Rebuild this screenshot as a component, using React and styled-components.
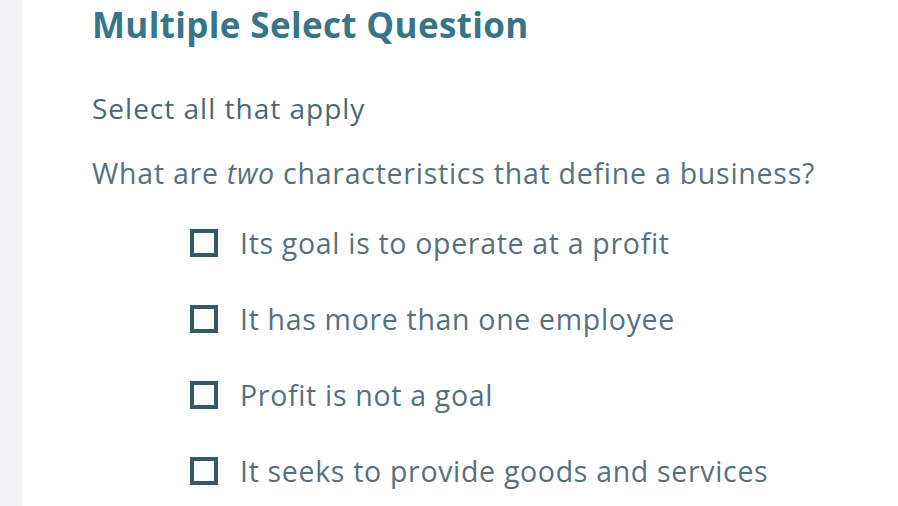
import styled, { createGlobalStyle } from "styled-components";

const GlobalStyle = createGlobalStyle`
  html, body {
    margin: 0;
    padding: 0;
    background: #ffffff;
  }
  body {
    font-family: "Open Sans", Lato, sans-serif;
    font-variant-ligatures: none;
  }
`;

const Page = styled.div`
  display: flex;
  width: 898px;
  height: 506px;
  overflow: hidden;
  background: #fff;
`;

const Rail = styled.div`
  width: 22px;
  flex-shrink: 0;
  background: #f1f2f4;
`;

const Content = styled.div`
  padding: 2px 0 0 70px;
  display: flex;
  flex-direction: column;
`;

const Title = styled.h1`
  margin: 0;
  font-size: 35px;
  font-weight: 700;
  line-height: 46px;
  letter-spacing: 0.35px;
  color: #377587;
`;

const Instruction = styled.p`
  margin: 42px 0 0;
  font-size: 28px;
  line-height: 36px;
  letter-spacing: 1px;
  color: #4b6775;
`;

const Question = styled.p`
  margin: 28px 0 0;
  font-size: 28.5px;
  line-height: 38px;
  letter-spacing: 0.75px;
  color: #58707d;

  em {
    font-style: italic;
  }
`;

const Options = styled.ul`
  list-style: none;
  margin: 33px 0 0;
  padding: 0 0 0 98px;
  display: flex;
  flex-direction: column;
  gap: 40px;
`;

const Option = styled.li`
  display: flex;
  align-items: center;
  gap: 22px;
  height: 36px;
  font-size: 28.5px;
  letter-spacing: 0.68px;
  color: #58707d;
`;

const Box = styled.span`
  width: 20px;
  height: 20px;
  border: 4px solid #345866;
  flex-shrink: 0;
`;

const options = [
  "Its goal is to operate at a profit",
  "It has more than one employee",
  "Profit is not a goal",
  "It seeks to provide goods and services",
];

export default function App() {
  return (
    <Page>
      <GlobalStyle />
      <Rail />
      <Content>
        <Title>Multiple Select Question</Title>
        <Instruction>Select all that apply</Instruction>
        <Question>
          What are <em>two</em> characteristics that define a business?
        </Question>
        <Options>
          {options.map((text) => (
            <Option key={text}>
              <Box />
              {text}
            </Option>
          ))}
        </Options>
      </Content>
    </Page>
  );
}
